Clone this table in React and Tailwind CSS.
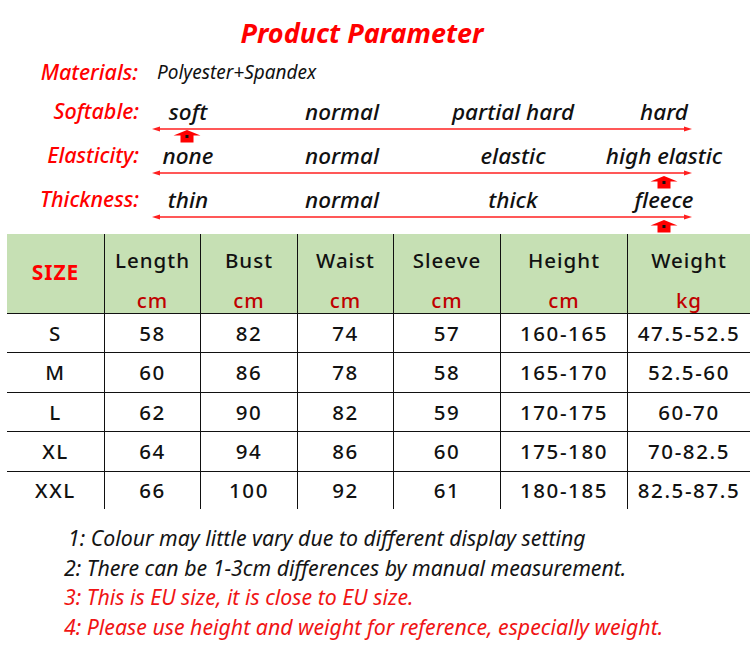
import React from 'react';

const scales = [
  { label: 'Softable:', items: ['soft', 'normal', 'partial hard', 'hard'], marker: 'left-[173px] top-[33px]' },
  { label: 'Elasticity:', items: ['none', 'normal', 'elastic', 'high elastic'], marker: 'left-[650px] top-[35px]' },
  { label: 'Thickness:', items: ['thin', 'normal', 'thick', 'fleece'], marker: 'left-[650px] top-[35px]' },
];

const columns = [
  { name: 'Length', unit: 'cm' },
  { name: 'Bust', unit: 'cm' },
  { name: 'Waist', unit: 'cm' },
  { name: 'Sleeve', unit: 'cm' },
  { name: 'Height', unit: 'cm' },
  { name: 'Weight', unit: 'kg' },
];

const rows = [
  { h: 'h-[39px]', cells: ['S', '58', '82', '74', '57', '160-165', '47.5-52.5'] },
  { h: 'h-[40px]', cells: ['M', '60', '86', '78', '58', '165-170', '52.5-60'] },
  { h: 'h-[39px]', cells: ['L', '62', '90', '82', '59', '170-175', '60-70'] },
  { h: 'h-[40px]', cells: ['XL', '64', '94', '86', '60', '175-180', '70-82.5'] },
  { h: 'h-[38px]', cells: ['XXL', '66', '100', '92', '61', '180-185', '82.5-87.5'] },
];

const notes = [
  { text: '1: Colour may little vary due to different display setting', cls: 'text-[#141414] pl-[68px]' },
  { text: '2: There can be 1-3cm differences by manual measurement.', cls: 'text-[#141414] pl-[64px]' },
  { text: '3: This is EU size, it is close to EU size.', cls: 'text-[#f01414] pl-[64px]' },
  { text: '4: Please use height and weight for reference, especially weight.', cls: 'text-[#f01414] pl-[64px]' },
];

function Marker({ className }) {
  return (
    <svg className={`absolute ${className}`} width="28" height="13" viewBox="0 0 28 13">
      <polygon points="14,0 27.5,5.5 20.5,5.5 20.5,12.5 7.5,12.5 7.5,5.5 0.5,5.5" fill="#ff0000" />
      <rect x="12.5" y="5" width="3" height="3" fill="#111" />
    </svg>
  );
}

function ScaleArrow() {
  return (
    <svg className="ml-[152px] block" width="540" height="6" viewBox="0 0 540 6">
      <line x1="4" y1="3" x2="536" y2="3" stroke="#ff2020" strokeWidth="1.4" />
      <polygon points="0,3 8,0.6 8,5.4" fill="#ff2020" />
      <polygon points="540,3 532,0.6 532,5.4" fill="#ff2020" />
    </svg>
  );
}

export default function App() {
  return (
    <div className="w-[750px] h-[662px] bg-white overflow-hidden" style={{ fontFamily: '"Noto Sans", sans-serif' }}>
      <div className="pt-[16px] pr-[26px] text-center text-[27px] leading-[34px] font-bold italic text-[#ff0000]">
        Product Parameter
      </div>

      <div className="mt-[7px] flex h-[30px] items-center">
        <div className="w-[140px] pr-[2px] text-right text-[21.5px] font-medium italic text-[#ff0000]">Materials:</div>
        <div className="ml-[17px] text-[19px] italic text-[#111]">Polyester+Spandex</div>
      </div>

      <div className="mt-[10px] flex flex-col gap-[9px]">
        {scales.map((s) => (
          <div key={s.label} className="relative">
            <div className="flex h-[29px] items-center">
              <div className="w-[140px] pr-[1px] text-right text-[21.5px] font-medium italic text-[#ff0000]">{s.label}</div>
              <div className="grid grid-cols-[96px_212px_130px_172px] text-[22.5px] font-medium italic text-[#111]">
                {s.items.map((it) => (
                  <div key={it} className="text-center leading-[29px]">{it}</div>
                ))}
              </div>
            </div>
            <ScaleArrow />
            <Marker className={s.marker} />
          </div>
        ))}
      </div>

      <div className="mt-[14px] ml-[7px] grid grid-cols-[97px_96px_97px_96px_107px_127px_123px] text-[#111] text-[20.5px] font-medium">
        <div className="flex h-[79px] items-center justify-center bg-[#c6e0b4] pb-[2px] text-[21px] font-bold tracking-[1px] text-[#ff0000]">
          SIZE
        </div>
        {columns.map((c) => (
          <div key={c.name} className="h-[79px] border-l border-[#111] bg-[#c6e0b4] pt-[12px] text-center">
            <div className="leading-[28px] tracking-[1px]">{c.name}</div>
            <div className="mt-[14px] leading-[24px] tracking-[1px] text-[#c00000]">{c.unit}</div>
          </div>
        ))}
        {rows.map((r) =>
          r.cells.map((v, i) => (
            <div
              key={r.cells[0] + i}
              className={`${r.h} flex items-center justify-center border-t border-[#111] tracking-[1.6px] ${i > 0 ? 'border-l' : ''}`}
            >
              {v}
            </div>
          ))
        )}
      </div>

      <div className="mt-[14px] text-[21.3px] italic leading-[29.5px]">
        {notes.map((n) => (
          <div key={n.text} className={n.cls}>{n.text}</div>
        ))}
      </div>
    </div>
  );
}
